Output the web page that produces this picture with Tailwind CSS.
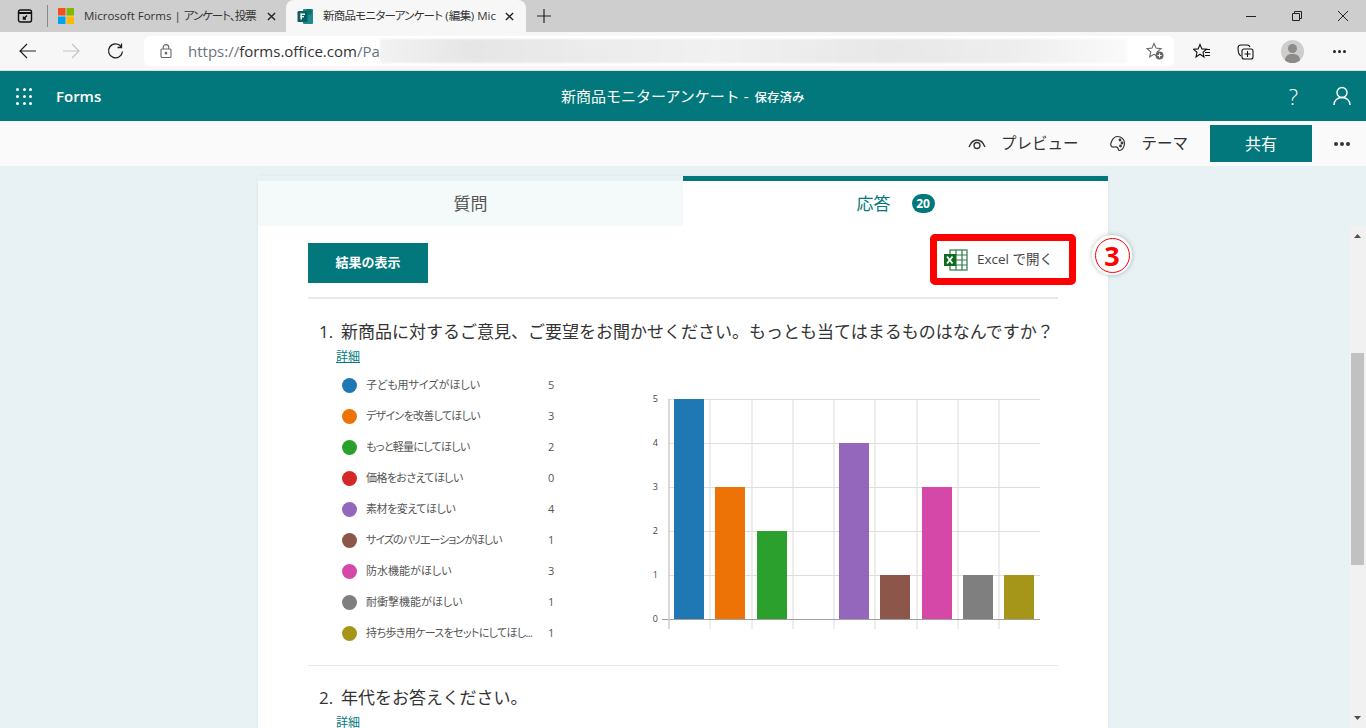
<!DOCTYPE html>
<html lang="ja"><head><meta charset="utf-8"><script src="https://cdn.jsdelivr.net/npm/@tailwindcss/browser@4"></script></head>
<body class="w-[1366px] h-[728px] overflow-hidden bg-[#e8f1f4] font-['Open_Sans','Noto_Sans_CJK_JP',sans-serif] text-[#333]">
<div class="h-8 bg-[#cecece] flex items-stretch relative">
  <div class="w-[47px] flex items-center justify-center pl-[2px]">
    <svg width="16" height="16" viewBox="0 0 16 16" fill="none" stroke="#111" stroke-width="1.4"><rect x="1.500" y="2" width="13" height="12" rx="2"/><path d="M1.500 5h13" stroke-width="2"/><path d="M10 7.500 6.500 11M6.500 8.500V11H9"/></svg>
  </div>
  <div class="w-px h-[22px] bg-[#888] self-center"></div>
  <div class="w-[238px] flex items-center pl-[10px] text-[11.500px] text-[#333] whitespace-nowrap [font-feature-settings:'palt']">
    <svg width="16" height="16" viewBox="0 0 16 16" class="shrink-0"><rect width="7.500" height="7.500" fill="#f25022"/><rect x="8.500" width="7.500" height="7.500" fill="#7fba00"/><rect y="8.500" width="7.500" height="7.500" fill="#00a4ef"/><rect x="8.500" y="8.500" width="7.500" height="7.500" fill="#ffb900"/></svg>
    <span class="ml-[10px] w-[177px]">Microsoft Forms | <span class="tracking-[-1px]">アンケート、投票</span></span>
    <svg width="9" height="9" viewBox="0 0 10 10" stroke="#222" stroke-width="1.500" class="ml-[6px]"><path d="M1 1l8 8M9 1l-8 8"/></svg>
  </div>
  <div class="w-[240px] bg-[#f7f7f7] rounded-t-lg flex items-center pl-[11px] text-[11.500px] whitespace-nowrap [font-feature-settings:'palt']">
    <svg width="17" height="17" viewBox="0 0 17 17" class="shrink-0"><rect x="6" y="1" width="10" height="15" rx="1" fill="#1d8a8c"/><circle cx="12" cy="4" r="3" fill="#0f6f72"/><rect x="0.500" y="3" width="10" height="11" rx="1" fill="#0b5f63"/><rect x="3.500" y="5.500" width="4.500" height="1.500" fill="#fff"/><rect x="3.500" y="5.500" width="1.500" height="6" fill="#fff"/><rect x="3.500" y="8" width="3.500" height="1.400" fill="#fff"/></svg>
    <span class="ml-[9px] w-[173px]"><span class="tracking-[-0.750px]">新商品モニターアンケート</span> (<span class="tracking-[-0.500px]">編集</span>) Mic</span>
    <svg width="9" height="9" viewBox="0 0 10 10" stroke="#222" stroke-width="1.500" class="ml-[9px]"><path d="M1 1l8 8M9 1l-8 8"/></svg>
  </div>
  <div class="w-[36px] flex items-center justify-center">
    <svg width="14" height="14" viewBox="0 0 14 14" stroke="#222" stroke-width="1.200"><path d="M7 0v14M0 7h14"/></svg>
  </div>
  <div class="flex-1"></div>
  <div class="flex items-center gap-[36px] pr-[18px]">
    <svg width="10" height="10" viewBox="0 0 10 10" stroke="#222" stroke-width="1"><path d="M0 5.500h10"/></svg>
    <svg width="10" height="10" viewBox="0 0 10 10" fill="none" stroke="#222" stroke-width="1"><path d="M.5 2.500h7v7h-7zM2.500 2.500v-2h7v7h-2"/></svg>
    <svg width="10" height="10" viewBox="0 0 10 10" stroke="#222" stroke-width="1"><path d="M0 0l10 10M10 0L0 10"/></svg>
  </div>
</div>
<div class="h-[39px] bg-[#f7f7f7] flex items-center border-b border-[#dedede] relative">
  <div class="w-[144px] flex items-center text-[#222] shrink-0">
    <svg width="18" height="16" viewBox="0 0 18 16" fill="none" stroke="#222" stroke-width="1.200" class="ml-[19px]"><path d="M1 8h16M8 1 1 8l7 7"/></svg>
    <svg width="18" height="16" viewBox="0 0 18 16" fill="none" stroke="#c4c4c4" stroke-width="1.200" class="ml-[26px]"><path d="M0 8h16M9 1l7 7-7 7"/></svg>
    <svg width="17" height="17" viewBox="0 0 17 17" fill="none" stroke="#222" stroke-width="1.300" class="ml-[26px]"><path d="M14 3.500A7 7 0 1 0 15.500 8.500M14.500 .5v4h-4"/></svg>
  </div>
  <div class="w-[1030px] h-[30px] bg-white rounded-md flex items-center shrink-0 relative">
    <svg width="12" height="14" viewBox="0 0 12 14" fill="none" stroke="#666" stroke-width="1.100" class="ml-[16px]"><rect x="1" y="5" width="10" height="8.500" rx="1"/><path d="M3.200 5V3.400a2.800 2.800 0 0 1 5.600 0V5"/><circle cx="6" cy="9.200" r=".8" fill="#666"/></svg>
    <span class="ml-[16px] text-[15px] whitespace-nowrap text-[#333]"><span class="text-[#6b7280]">https://</span>forms.office.com<span class="text-[#6b7280]">/Pa</span></span>
    <div class="absolute left-[236px] top-[3px] w-[747px] h-[24px] bg-[linear-gradient(90deg,#f2f2f2,#e6e6e6_12%,#ececec_28%,#f1f1f1_45%,#e8e8e8_68%,#eeeeee_85%,#fafafa)] blur-[1px]"></div>
    <svg width="18" height="18" viewBox="0 0 18 18" fill="none" stroke="#666" stroke-width="1.100" class="absolute left-[1002px] top-[6px]"><path d="M8 1.500l2 4.600 5 .5-3.800 3.300 1.100 4.900L8 12.300l-4.300 2.500 1.100-4.900L1 6.600l5-.5z"/><circle cx="13.500" cy="13.500" r="4" fill="#666" stroke="none"/><path d="M13.500 11.500v4M11.500 13.500h4" stroke="#fff"/></svg>
  </div>
  <svg width="18" height="17" viewBox="0 0 18 17" fill="none" stroke="#111" stroke-width="1.100" class="ml-[19px]"><path d="M7 1.500l1.900 4.400 4.600.4-3.500 3 1 4.700L7 11.200l-4 2.800 1-4.700-3.500-3 4.600-.4z"/><path d="M12 6.500h5M12 9.500h5M12 12.500h5"/></svg>
  <svg width="17" height="17" viewBox="0 0 17 17" fill="none" stroke="#111" stroke-width="1.100" class="ml-[26px]"><path d="M4 13C2 12 1 10 1 5c0-2 1-3 3-3l6 0c1.500 0 2.500.5 3 2"/><rect x="5" y="6" width="11" height="10" rx="2"/><path d="M10.500 8v6M7.500 11h6"/></svg>
  <div class="ml-[27px] w-[23px] h-[23px] rounded-full bg-[#cfcdcb] overflow-hidden relative">
    <div class="absolute left-[7px] top-[4px] w-[9px] h-[9px] rounded-full bg-[#8d8b89]"></div>
    <div class="absolute left-[4px] top-[14px] w-[15px] h-[12px] rounded-full bg-[#8d8b89]"></div>
  </div>
  <div class="ml-[29px] flex gap-[2px]"><i class="w-[3px] h-[3px] rounded-full bg-[#222]"></i><i class="w-[3px] h-[3px] rounded-full bg-[#222]"></i><i class="w-[3px] h-[3px] rounded-full bg-[#222]"></i></div>
</div>
<header class="h-[50px] bg-[#03787c] flex items-center relative text-white">
  <div class="ml-[16px] grid grid-cols-3 gap-[4px] w-[16px]">
    <i class="w-[3px] h-[3px] bg-white rounded-full"></i><i class="w-[3px] h-[3px] bg-white rounded-full"></i><i class="w-[3px] h-[3px] bg-white rounded-full"></i><i class="w-[3px] h-[3px] bg-white rounded-full"></i><i class="w-[3px] h-[3px] bg-white rounded-full"></i><i class="w-[3px] h-[3px] bg-white rounded-full"></i><i class="w-[3px] h-[3px] bg-white rounded-full"></i><i class="w-[3px] h-[3px] bg-white rounded-full"></i><i class="w-[3px] h-[3px] bg-white rounded-full"></i>
  </div>
  <span class="ml-[24px] text-[15px] font-semibold">Forms</span>
  <div class="absolute left-[561px] top-[15px] text-[15px] leading-[20px] whitespace-nowrap">新商品モニターアンケート - <span class="ml-[2px] text-[12.500px] font-medium">保存済み</span></div>
  <div class="flex-1"></div>
  <span class="text-[22px] font-light mr-[35px]">?</span>
  <svg width="18" height="20" viewBox="0 0 18 20" fill="none" stroke="#fff" stroke-width="1.400" class="mr-[15px]"><circle cx="9" cy="6.500" r="5"/><path d="M1 19c0-4.500 3.500-7.500 8-7.500s8 3 8 7.500"/></svg>
</header>
<div class="h-[45px] bg-[#fafafa] flex items-center relative text-[15.500px]">
  <div class="flex-1"></div>
  <svg width="18" height="12" viewBox="0 0 18 12" fill="none" stroke="#333" stroke-width="1.300"><path d="M1 9C3 4 6 2 9 2s6 2 8 7"/><circle cx="9" cy="7.500" r="3"/></svg>
  <span class="ml-[15px]">プレビュー</span>
  <svg width="17" height="17" viewBox="0 0 17 17" fill="none" stroke="#333" stroke-width="1.200" class="ml-[31px]"><path d="M8.500 1.500c4 0 7 2.700 7 6.500 0 5-3 7.500-5 7.500-1.500 0-1-2-2-3-1.500-1.500-4 .5-6-1-2-2 1-10 6-10z"/><circle cx="11" cy="5" r=".8"/><circle cx="13" cy="8" r=".8"/><circle cx="11.500" cy="11" r=".8"/></svg>
  <span class="ml-[15px]">テーマ</span>
  <div class="ml-[22px] w-[102px] h-[37px] bg-[#03787c] text-white text-[16px] flex items-center justify-center">共有</div>
  <div class="ml-[22px] mr-[16px] flex gap-[2px]"><i class="w-[4px] h-[4px] rounded-full bg-[#333]"></i><i class="w-[4px] h-[4px] rounded-full bg-[#333]"></i><i class="w-[4px] h-[4px] rounded-full bg-[#333]"></i></div>
</div>
<main class="relative h-[562px] overflow-hidden">
  <section class="absolute left-[258px] top-[10px] w-[850px] h-[560px] bg-white shadow-[0_0_4px_rgba(0,0,0,.05)]">
    <div class="h-[50px] flex">
      <div class="w-[425px] h-[50px] border-t-[5px] border-[#e8f1f4] bg-[#f4f9f9] flex items-center justify-center text-[17px] text-[#555]">質問</div>
      <div class="w-[425px] border-t-[5px] border-[#03787c] flex items-center justify-center text-[17px] text-[#03787c]">応答<span class="ml-[21px] w-[23px] h-[19px] rounded-full bg-[#03787c] text-white text-[12px] font-bold flex items-center justify-center">20</span></div>
    </div>
    <div class="mx-[50px] border-b-2 border-[#e8e8e8] h-[73px] flex items-start justify-between pt-[17px]">
      <div class="w-[120px] h-[40px] bg-[#03787c] text-white text-[13px] font-bold flex items-center justify-center">結果の表示</div>
      <div class="relative w-[146px] h-[51px] mt-[-9px] mr-[-18px] border-[7px] border-[#ff0000] rounded-[5px] flex items-center">
        <svg width="24" height="22" viewBox="0 0 24 22" class="ml-[7px] shrink-0"><rect x="6" y="1" width="17" height="20" fill="#fff" stroke="#2f7a4a" stroke-width="1.200"/><path d="M6 6h17M6 11h17M6 16h17M12 1v20M18 1v20" stroke="#2f7a4a" stroke-width="1.200"/><rect x="0" y="5" width="12" height="12" fill="#0f6b1f"/><path d="M3 7.500l5.500 7M8.500 7.500l-5.500 7" stroke="#fff" stroke-width="1.800"/></svg>
        <span class="ml-[9px] text-[13.500px] text-[#444] whitespace-nowrap">Excel で開く</span>
      </div>
    </div>
    <div class="pl-[61px] pt-[23px] text-[17px] leading-[20px] text-[#333] whitespace-nowrap"><span class="inline-block w-[22px]">1.</span>新商品に対するご意見、ご要望をお聞かせください。もっとも当てはまるものはなんですか？</div>
    <a class="block ml-[78px] mt-[7px] text-[12px] leading-[16px] text-[#03787c] underline">詳細</a>
    <div class="flex mx-[50px] h-[301px] border-b border-[#e8e8e8]">
      <ul class="w-[262px] ml-[34px] mt-[5px] text-[11px] text-[#555] [font-feature-settings:'palt']">
        <li class="h-[31px] flex items-center"><i class="w-[15px] h-[15px] rounded-full bg-[#1f77b4] shrink-0"></i><span class="ml-[9px] w-[182px] whitespace-nowrap">子ども用サイズがほしい</span><span>5</span></li>
        <li class="h-[31px] flex items-center"><i class="w-[15px] h-[15px] rounded-full bg-[#ed7307] shrink-0"></i><span class="ml-[9px] w-[182px] whitespace-nowrap tracking-[-0.700px]">デザインを改善してほしい</span><span>3</span></li>
        <li class="h-[31px] flex items-center"><i class="w-[15px] h-[15px] rounded-full bg-[#2ca02c] shrink-0"></i><span class="ml-[9px] w-[182px] whitespace-nowrap tracking-[-0.700px]">もっと軽量にしてほしい</span><span>2</span></li>
        <li class="h-[31px] flex items-center"><i class="w-[15px] h-[15px] rounded-full bg-[#d62728] shrink-0"></i><span class="ml-[9px] w-[182px] whitespace-nowrap tracking-[-0.600px]">価格をおさえてほしい</span><span>0</span></li>
        <li class="h-[31px] flex items-center"><i class="w-[15px] h-[15px] rounded-full bg-[#9467bd] shrink-0"></i><span class="ml-[9px] w-[182px] whitespace-nowrap tracking-[-0.450px]">素材を変えてほしい</span><span>4</span></li>
        <li class="h-[31px] flex items-center"><i class="w-[15px] h-[15px] rounded-full bg-[#8c564b] shrink-0"></i><span class="ml-[9px] w-[182px] whitespace-nowrap tracking-[-1px]">サイズのバリエーションがほしい</span><span>1</span></li>
        <li class="h-[31px] flex items-center"><i class="w-[15px] h-[15px] rounded-full bg-[#d548a8] shrink-0"></i><span class="ml-[9px] w-[182px] whitespace-nowrap">防水機能がほしい</span><span>3</span></li>
        <li class="h-[31px] flex items-center"><i class="w-[15px] h-[15px] rounded-full bg-[#7f7f7f] shrink-0"></i><span class="ml-[9px] w-[182px] whitespace-nowrap">耐衝撃機能がほしい</span><span>1</span></li>
        <li class="h-[31px] flex items-center"><i class="w-[15px] h-[15px] rounded-full bg-[#a59519] shrink-0"></i><span class="ml-[9px] w-[182px] whitespace-nowrap tracking-[-0.650px]">持ち歩き用ケースをセットにしてほし...</span><span>1</span></li>
      </ul>
      <svg width="410" height="250" viewBox="0 0 410 250" class="ml-[36px] mt-[20px] shrink-0">
        <g stroke="#e8e8e8" stroke-width="1.500" fill="none"><path d="M70 14v230M112 14v230M153 14v230M194 14v230M235 14v230M277 14v230M318 14v230M359 14v230"/></g>
        <g stroke="#dddddd" fill="none"><path d="M28 14.500h372M28 58.500h372M28 102.500h372M28 146.500h372M28 190.500h372"/></g>
        <rect x="34" y="14" width="30" height="220" fill="#1f77b4"/><rect x="75" y="102" width="30" height="132" fill="#ed7307"/><rect x="117" y="146" width="30" height="88" fill="#2ca02c"/><rect x="199" y="58" width="30" height="176" fill="#9467bd"/><rect x="240" y="190" width="30" height="44" fill="#8c564b"/><rect x="282" y="102" width="30" height="132" fill="#d548a8"/><rect x="323" y="190" width="30" height="44" fill="#7f7f7f"/><rect x="364" y="190" width="30" height="44" fill="#a59519"/>
        <path d="M22 234.500h378" stroke="#a0a0a0"/><path d="M29 14v230" stroke="#cccccc" stroke-width="1.500"/>
        <g font-size="9" fill="#444" font-family="'Open Sans',sans-serif" text-anchor="end"><text x="18" y="17">5</text><text x="18" y="61">4</text><text x="18" y="105">3</text><text x="18" y="149">2</text><text x="18" y="193">1</text><text x="18" y="237">0</text></g>
      </svg>
    </div>
    <div class="pl-[61px] pt-[22px] text-[17px] leading-[20px] whitespace-nowrap"><span class="inline-block w-[22px]">2.</span>年代をお答えください。</div>
    <a class="block ml-[78px] mt-[7px] text-[12px] leading-[16px] text-[#03787c] underline">詳細</a>
  </section>
  <div class="absolute left-[1092px] top-[69px] w-[40px] h-[40px] rounded-full bg-white shadow-[0_0_5px_rgba(0,0,0,.25)] flex items-center justify-center">
    <div class="w-[35px] h-[35px] rounded-full border border-[#ff0000] flex items-center justify-center text-[#ff0000] font-bold text-[27px] leading-none">3</div>
  </div>
  <div class="absolute left-[1349px] top-[60px] w-[17px] h-[502px] bg-[#f1f1f1]">
    <svg width="7" height="4" viewBox="0 0 7 4" class="absolute left-[5px] top-[8px]"><path d="M3.500 0 7 4H0z" fill="#505050"/></svg>
    <div class="absolute left-[2px] top-[127px] w-[13px] h-[212px] bg-[#c1c1c1]"></div>
    <svg width="7" height="4" viewBox="0 0 7 4" class="absolute left-[5px] top-[490px]"><path d="M0 0h7L3.500 4z" fill="#505050"/></svg>
  </div>
</main>
</body></html>
